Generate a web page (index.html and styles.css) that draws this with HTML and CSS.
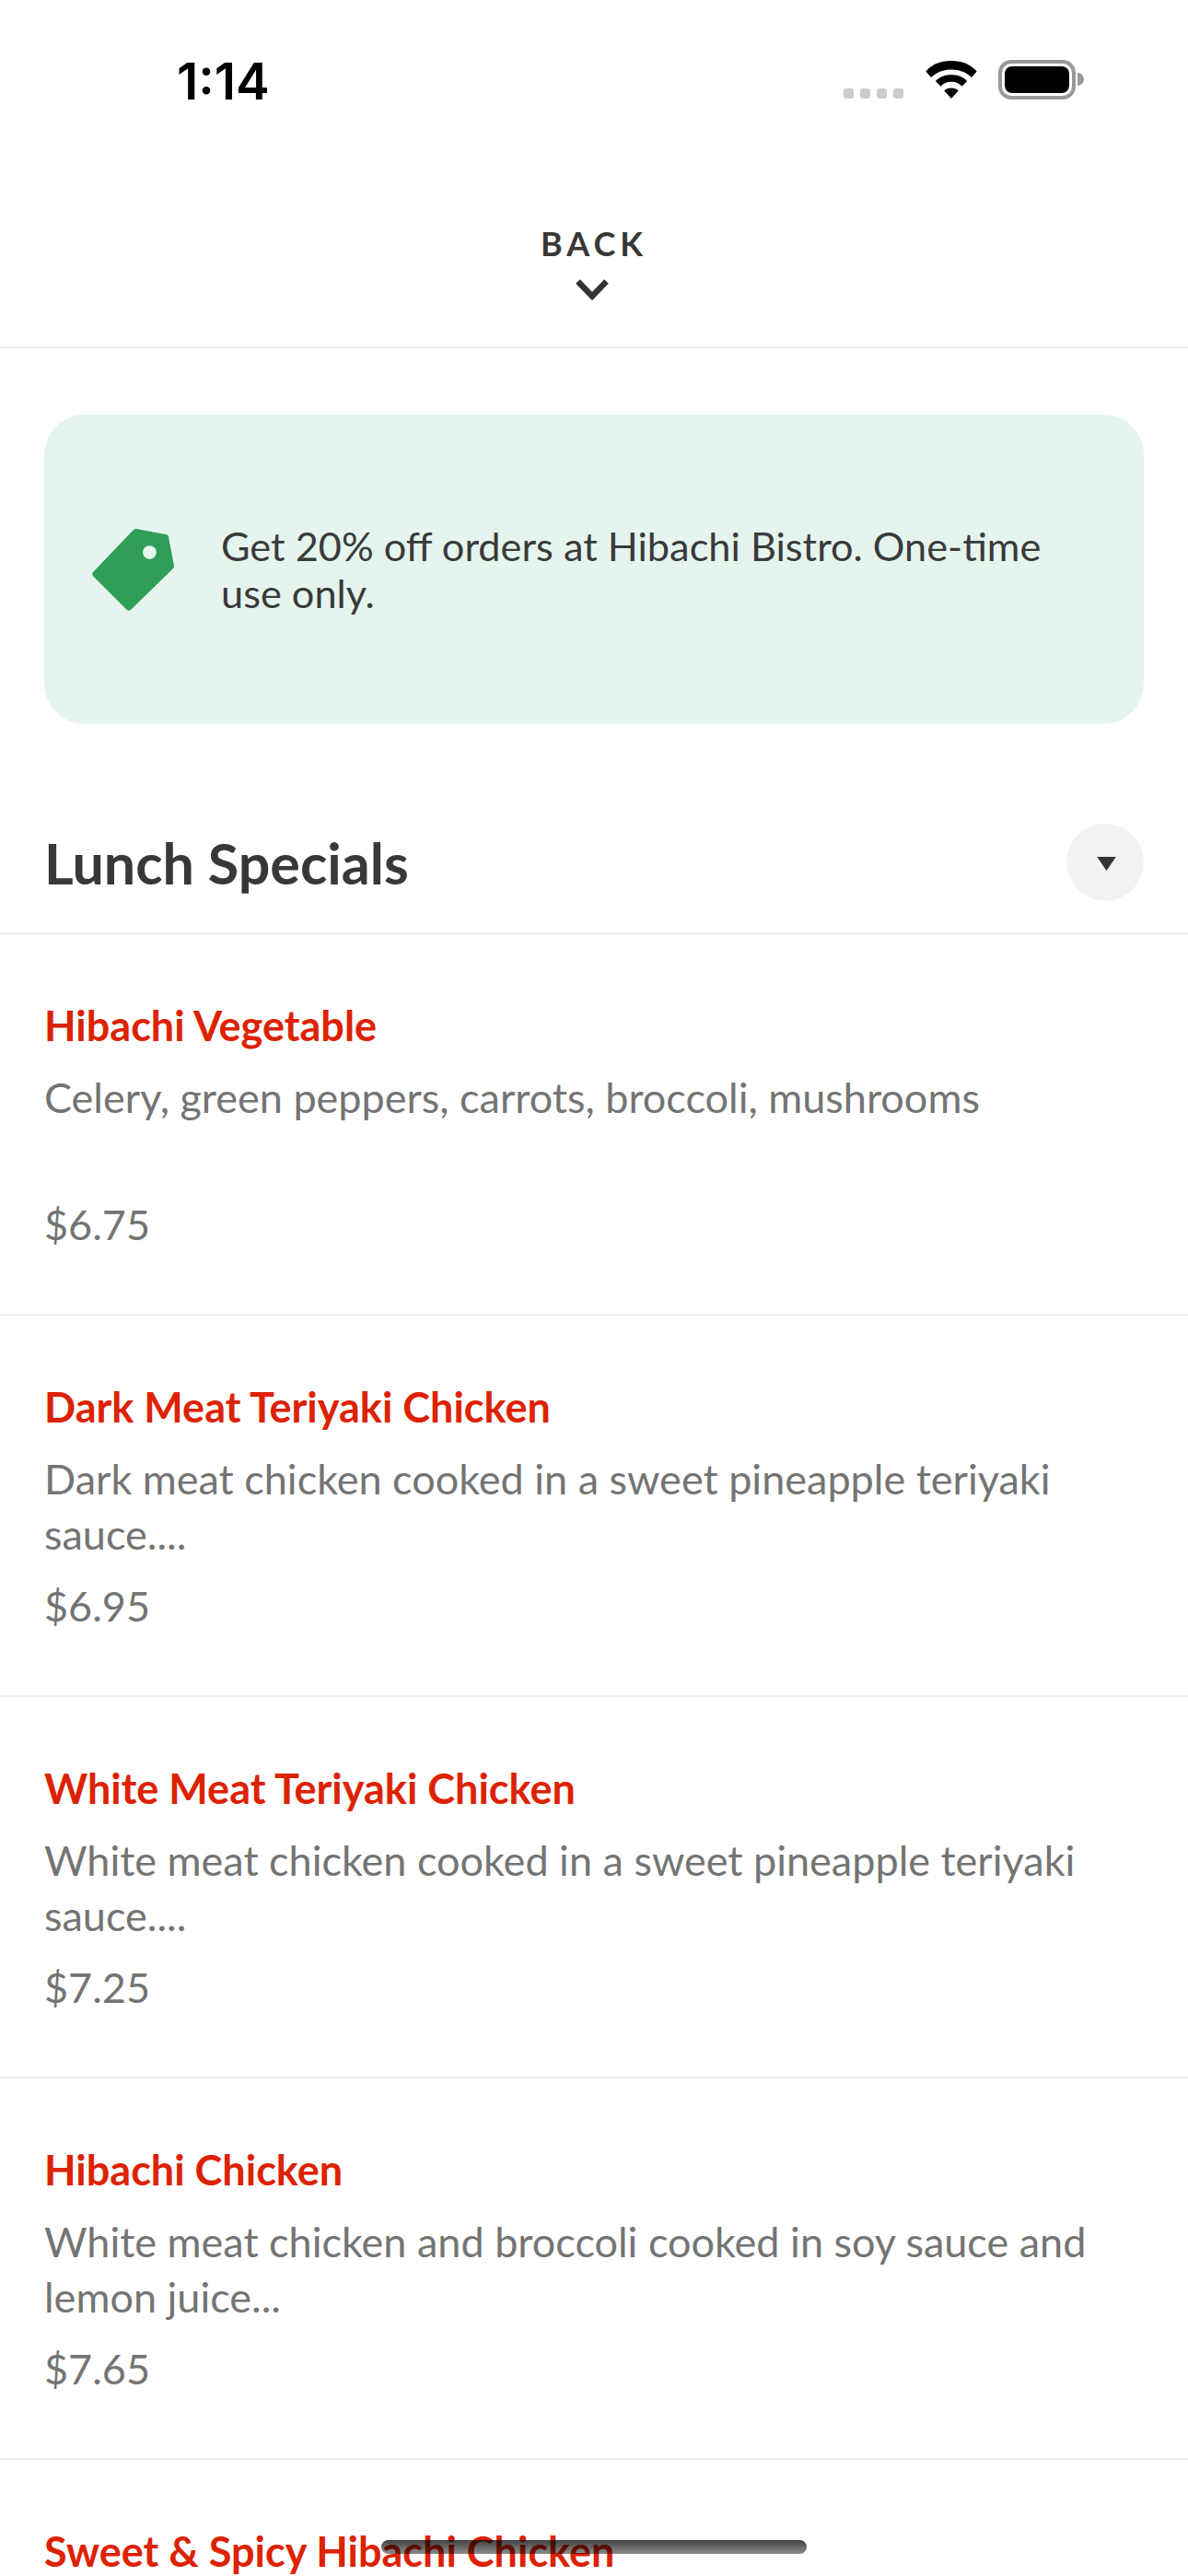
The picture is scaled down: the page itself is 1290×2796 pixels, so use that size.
FILE: index.html
```html
<!DOCTYPE html>
<html lang="en">
<head>
<meta charset="utf-8">
<title>Hibachi Bistro</title>
<link rel="stylesheet" href="styles.css">
</head>
<body>
<div class="screen">
  <div class="status">
    <span class="time">1:14</span>
    <div class="status-icons">
      <div class="signal"><i></i><i></i><i></i><i></i></div>
      <svg class="wifi" width="58" height="42" viewBox="0 0 60 44"><path d="M30 1C18 1 8 5 1 13l6 7c6-6 14-9 23-9s17 3 23 9l6-7C52 5 42 1 30 1z" fill="#000"/><path d="M30 17c-7 0-13 2-18 7l6 6c3-3 7-5 12-5s9 2 12 5l6-6c-5-5-11-7-18-7z" fill="#000"/><path d="M30 32c-3 0-6 1-8 3l8 9 8-9c-2-2-5-3-8-3z" fill="#000"/></svg>
      <div class="battery"><div class="battery-fill"></div></div>
      <div class="battery-cap"></div>
    </div>
  </div>
  <header class="back">
    <span class="back-label">BACK</span>
    <svg class="back-chevron" width="36" height="24" viewBox="0 0 36 24"><path d="M2.500 3.500L18 19.500 33.500 3.500" fill="none" stroke="#333" stroke-width="6.500"/></svg>
  </header>
  <section class="promo">
    <svg class="tag" width="89" height="89" viewBox="0 2 87 87"><path d="M47 2l32 6c1 0 2 1 2 2l6 31c0 1 0 2-1 3L41 88c-1 1-3 1-4 0L1 52c-1-1-1-3 0-4L44 3c1-1 2-1 3-1z" fill="#2f9e58"/><circle cx="61" cy="27" r="7.200" fill="#e5f5ed"/></svg>
    <p class="promo-text">Get 20% off orders at Hibachi Bistro. One-time use only.</p>
  </section>
  <div class="section-head">
    <h2 class="section-title">Lunch Specials</h2>
    <div class="toggle"><svg class="toggle-arrow" width="21" height="15" viewBox="0 0 22 16"><path d="M0 0h22L11 16z" fill="#333"/></svg></div>
  </div>
  <article class="item">
    <h3 class="item-name">Hibachi Vegetable</h3>
    <p class="item-desc">Celery, green peppers, carrots, broccoli, mushrooms</p>
    <p class="item-price">$6.75</p>
  </article>
  <article class="item">
    <h3 class="item-name">Dark Meat Teriyaki Chicken</h3>
    <p class="item-desc">Dark meat chicken cooked in a sweet pineapple teriyaki sauce....</p>
    <p class="item-price">$6.95</p>
  </article>
  <article class="item">
    <h3 class="item-name">White Meat Teriyaki Chicken</h3>
    <p class="item-desc">White meat chicken cooked in a sweet pineapple teriyaki sauce....</p>
    <p class="item-price">$7.25</p>
  </article>
  <article class="item">
    <h3 class="item-name">Hibachi Chicken</h3>
    <p class="item-desc">White meat chicken and broccoli cooked in soy sauce and lemon juice...</p>
    <p class="item-price">$7.65</p>
  </article>
  <article class="item">
    <h3 class="item-name">Sweet &amp; Spicy Hibachi Chicken</h3>
  </article>
  <div class="home-indicator"></div>
</div>
</body>
</html>
```
FILE: styles.css
```css
* { box-sizing: border-box; }
html, body { margin: 0; padding: 0; background: #fff; }
.screen {
  position: relative;
  width: 1290px;
  height: 2796px;
  overflow: hidden;
  font-family: Lato, "Open Sans", sans-serif;
}
.status {
  height: 132px;
  display: flex;
  justify-content: space-between;
  align-items: flex-start;
  padding: 58px 0 0 192px;
}
.time {
  font-family: Inter, Roboto, sans-serif;
  font-size: 55px;
  line-height: 60px;
  font-weight: 600;
  color: #000;
}
.status-icons {
  display: flex;
  align-items: flex-start;
  padding: 7px 113px 0 0;
}
.signal { display: flex; gap: 7px; margin: 31px 23px 0 0; }
.signal i { width: 11px; height: 11px; border-radius: 3px; background: #ccc; }
.wifi { margin: 0 22px 0 0; }
.battery {
  width: 84px;
  height: 43px;
  border: 4px solid #999;
  border-radius: 14px;
  padding: 3px;
}
.battery-fill { width: 100%; height: 100%; background: #000; border-radius: 8px; }
.battery-cap {
  width: 7px;
  height: 14px;
  margin: 14px 0 0 2px;
  background: #999;
  border-radius: 0 7px 7px 0;
}
.back {
  height: 246px;
  border-bottom: 2px solid #efefef;
  display: flex;
  flex-direction: column;
  align-items: center;
}
.back-label {
  font-size: 36px;
  line-height: 44px;
  font-weight: 700;
  letter-spacing: 5px;
  color: #383838;
  margin-top: 110px;
}
.back-chevron { margin: 16px 4px 0 0; }
.promo {
  margin: 72px 48px 0;
  height: 336px;
  background: #e5f5ed;
  border-radius: 44px;
  display: flex;
  align-items: center;
  padding: 0 60px 0 52px;
  gap: 51px;
}
.tag { flex: none; }
.promo-text {
  margin: 0;
  font-size: 43.300px;
  line-height: 51px;
  color: #3a3a3a;
}
.section-head {
  margin-top: 108px;
  padding: 0 48px;
  height: 120px;
  display: flex;
  justify-content: space-between;
  align-items: flex-start;
  border-bottom: 2px solid #efefef;
}
.section-title {
  margin: 0;
  font-size: 61px;
  line-height: 86px;
  font-weight: 700;
  color: #383838;
}
.toggle {
  width: 84px;
  height: 84px;
  border-radius: 50%;
  background: #f2f2f2;
  display: flex;
  align-items: center;
  justify-content: center;
}
.toggle-arrow { margin: 3px 0 0 3px; }
.item {
  height: 414px;
  padding: 74px 48px 0;
  border-bottom: 2px solid #efefef;
}
.item-name {
  margin: 0;
  font-size: 45px;
  line-height: 50px;
  font-weight: 700;
  color: #dc2200;
}
.item-desc {
  margin: 23px 0 0;
  height: 120px;
  font-size: 45px;
  line-height: 60px;
  color: #747474;
}
.item-price {
  margin: 18px 0 0;
  font-size: 45px;
  line-height: 60px;
  color: #747474;
}
.home-indicator {
  position: absolute;
  left: 414px;
  top: 2757px;
  width: 462px;
  height: 15px;
  border-radius: 8px;
  background: linear-gradient(rgba(0, 0, 0, 0.75), rgba(0, 0, 0, 0.45));
}
```
